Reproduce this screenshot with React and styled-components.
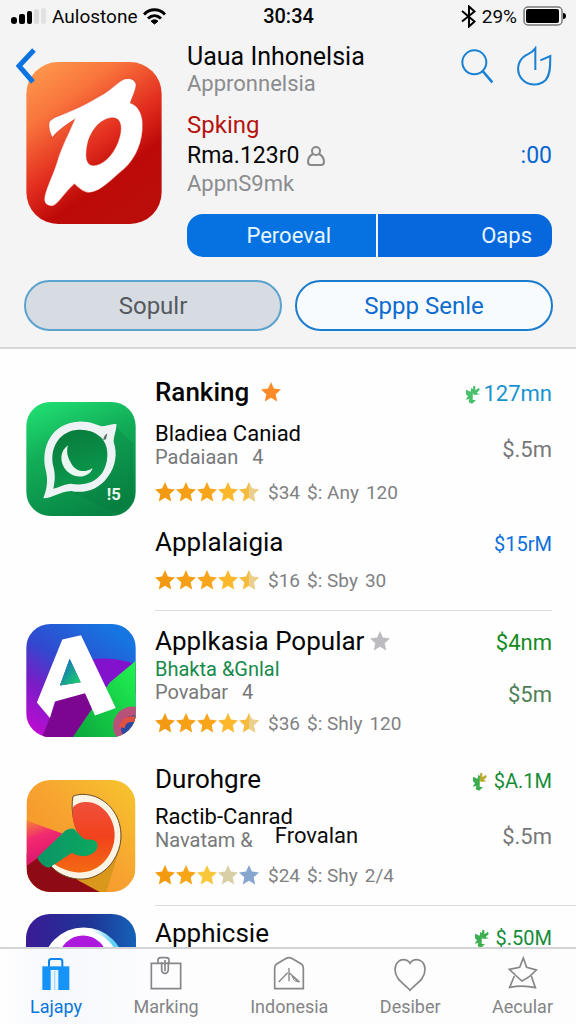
import React from "react";
import styled, { createGlobalStyle } from "styled-components";

const GlobalStyle = createGlobalStyle`
  *, *::before, *::after { box-sizing: border-box; }
  body {
    margin: 0;
    background: #fefefe;
    color: #060606;
    font-family: Roboto, "Liberation Sans", sans-serif;
  }
  button { font: inherit; color: inherit; border: 0; padding: 0; background: none; cursor: pointer; }
  h1, h2, p { margin: 0; font-weight: 400; }
  svg { display: block; flex: none; }
`;

const Screen = styled.div`
  height: 100vh;
  display: flex;
  flex-direction: column;
  overflow: hidden;
`;

const Header = styled.header`
  flex: none;
  background: #f4f4f5;
  border-bottom: 2px solid #d6d7d9;
`;

const StatusBar = styled.div`
  display: grid;
  grid-template-columns: 1fr auto 1fr;
  align-items: center;
  height: 32px;
  padding: 0 10px 0 11px;
  font-size: 19px;
`;

const StatusSide = styled.div`
  display: flex;
  align-items: center;
  gap: ${(p) => p.$gap}px;
  justify-content: ${(p) => (p.$end ? "flex-end" : "flex-start")};
`;

const Clock = styled.time`
  font-weight: 500;
  font-size: 20px;
`;

const Hero = styled.section`
  position: relative;
  display: flex;
  gap: 25px;
  padding: 10px 24px 0 26px;
`;

const BackButton = styled.button`
  position: absolute;
  left: 16px;
  top: 16px;
`;

const HeroIcon = styled.div`
  padding-top: 20px;
`;

const HeroInfo = styled.div`
  flex: 1;
  min-width: 0;
`;

const HeroTop = styled.div`
  display: flex;
  justify-content: space-between;
  align-items: flex-start;
`;

const Actions = styled.div`
  display: flex;
  gap: 22px;
  padding-top: 4px;
`;

const AppTitle = styled.h1`
  font-size: 25px;
  line-height: 30px;
`;

const HeroLine = styled.p`
  display: flex;
  align-items: center;
  gap: 8px;
  font-size: ${(p) => p.$size}px;
  line-height: ${(p) => p.$line}px;
  margin-top: ${(p) => p.$top || 0}px;
  color: ${(p) => p.$color || "inherit"};
`;

const Count = styled.span`
  margin-left: auto;
  color: #0a66cf;
`;

const Segments = styled.div`
  display: grid;
  grid-template-columns: 189fr 174fr;
  gap: 2px;
  margin-top: 18px;
  border-radius: 16px;
  overflow: hidden;
`;

const Segment = styled.button`
  height: 43px;
  padding-right: ${(p) => p.$pad}px;
  text-align: right;
  font-size: 22px;
  color: #e6f6ff;
  background: ${(p) => p.$bg};
`;

const Pills = styled.div`
  display: grid;
  grid-template-columns: 1fr 1fr;
  gap: 13px;
  padding: 23px 23px 16px 24px;
`;

const Pill = styled.button`
  height: 51px;
  border-radius: 26px;
  font-size: 24px;
  border: 2px solid ${(p) => (p.$muted ? "#5aa3cf" : "#1a7ccc")};
  background: ${(p) => (p.$muted ? "#d7dbe2" : "#f8fbfd")};
  color: ${(p) => (p.$muted ? "#55595e" : "#0d6ccf")};
`;

const List = styled.main`
  flex: 1;
  min-height: 0;
  overflow: hidden;
  background: #fefefe;
`;

const Entry = styled.article`
  display: flex;
  gap: 19px;
  padding: 0 24px 0 26px;
`;

const EntryIcon = styled.div`
  padding-top: ${(p) => p.$top}px;
`;

const EntryBody = styled.div`
  flex: 1;
  min-width: 0;
  padding-top: ${(p) => p.$top}px;
`;

const Listing = styled.div`
  display: flex;
  justify-content: space-between;
  margin-top: ${(p) => p.$top || 0}px;
`;

const Name = styled.h2`
  display: flex;
  align-items: center;
  gap: ${(p) => (p.$strong ? 12 : 6)}px;
  font-size: 26px;
  line-height: 32px;
  font-weight: ${(p) => (p.$strong ? 500 : 400)};
`;

const Developer = styled.p`
  font-size: ${(p) => (p.$green ? 20 : 22)}px;
  line-height: 24px;
  margin-top: ${(p) => p.$top || 0}px;
  color: ${(p) => (p.$green ? "#178a4b" : "inherit")};
`;

const Meta = styled.p`
  display: flex;
  gap: 14px;
  font-size: 20px;
  line-height: 22px;
  color: #77787a;
`;

const MetaStrong = styled.span`
  margin-left: 8px;
  color: #0c0c0c;
  font-size: 22px;
  line-height: 14px;
`;

const Rating = styled.div`
  display: flex;
  align-items: center;
  gap: 9px;
  height: 24px;
  margin-top: ${(p) => p.$top}px;
  font-size: 19px;
  color: #808183;
`;

const Stars = styled.div`
  display: flex;
  gap: 1px;
`;

const Words = styled.span`
  display: flex;
  gap: 7px;
`;

const Prices = styled.div`
  display: flex;
  flex-direction: column;
  align-items: flex-end;
  gap: ${(p) => p.$gap || 28}px;
  padding-top: ${(p) => p.$top || 4}px;
`;

const Price = styled.span`
  display: flex;
  align-items: center;
  gap: ${(p) => (p.$small ? 6 : 2)}px;
  font-size: ${(p) => (p.$small ? 20 : 22)}px;
  line-height: 28px;
  color: ${(p) => p.$color};
`;

const Rule = styled.hr`
  border: 0;
  border-top: 1px solid #dcdde0;
  margin: 18px ${(p) => (p.$wide ? "-24px" : "0")} 0 0;
`;

const TabBar = styled.nav`
  flex: none;
  display: flex;
  justify-content: space-between;
  height: 77px;
  padding: 7px 23px 0 30px;
  border-top: 2px solid #d3d4d6;
  background: linear-gradient(90deg, #fefefe 0, #f6f8fc 9%, #fdfdfe 30%);
`;

const Tab = styled.button`
  display: flex;
  flex-direction: column;
  align-items: center;
  gap: 3px;
  font-size: 18px;
  line-height: 24px;
  color: ${(p) => (p.$active ? "#0a76dc" : "#838486")};
`;

const STAR = "M10 0 12.9 6.6 20 7.4 14.7 12.2 16.2 19.4 10 15.8 3.8 19.4 5.3 12.2 0 7.4 7.1 6.6Z";

function Star({ color, half, size = 20 }) {
  return (
    <svg width={size} height={size} viewBox="0 0 20 20" aria-hidden="true">
      <path d={STAR} fill={color} />
      {half && <path d="M10 0 12.9 6.6 20 7.4 14.7 12.2 16.2 19.4 10 15.8Z" fill={half} />}
    </svg>
  );
}

const FULL = [["#f39a12"], ["#f79f16"], ["#f8a51c"], ["#fcb72a"], ["#f6bb3c", "#ebcf8e"]];
const LOW = [["#f49a0e"], ["#f8a516"], ["#f9c73c"], ["#d8cfa4"], ["#87a6cf"]];

function RatingLine({ top, words, stars = FULL }) {
  return (
    <Rating $top={top}>
      <Stars role="img" aria-label="Rating">
        {stars.map(([color, half], i) => (
          <Star key={i} color={color} half={half} />
        ))}
      </Stars>
      <Words>
        {words.map((w) => (
          <span key={w}>{w}</span>
        ))}
      </Words>
    </Rating>
  );
}

function Sprout({ color, accent }) {
  return (
    <svg width="16" height="19" viewBox="963 56 48 57" aria-hidden="true">
      <path d="M966 70 980 76 982 64 987 68 986 100 996 102 984 112 974 108 976 98 965 100 972 90 966 84Z" fill={color} />
      <path d="M988 58 994 60 994 72 1005 64 1007 71 998 80 1008 84 990 86 986 80Z" fill={accent || color} />
    </svg>
  );
}

function SignalIcon() {
  return (
    <svg width="35" height="16" viewBox="0 0 35 16" aria-hidden="true">
      <rect x="0" y="9" width="6" height="7" rx="3" />
      <rect x="8" y="6" width="6" height="10" rx="2" />
      <rect x="16" y="3" width="5" height="13" rx="2" />
      <rect x="23" y="1" width="5" height="15" rx="2" fill="#dcdcdd" />
      <rect x="30" y="0" width="5" height="16" rx="2" fill="#e2e2e3" />
    </svg>
  );
}

function WifiIcon() {
  return (
    <svg width="23" height="17" viewBox="0 0 23 17" fill="none" stroke="#000" strokeWidth="3" aria-hidden="true">
      <path d="M1 6.500C7 .3 16 .3 22 6.500" />
      <path d="M5 10.500C9 6.800 14 6.800 18 10.500" />
      <path d="M8 13.200C10 11.400 13 11.400 15 13.200L11.500 16Z" fill="#000" strokeWidth="1" />
    </svg>
  );
}

function BluetoothIcon() {
  return (
    <svg width="15" height="23" viewBox="0 0 15 23" fill="none" stroke="#000" strokeWidth="2" aria-hidden="true">
      <path d="M1 6 13.500 16.500 8 21.500V1.500L13.500 6.500 1 16.500" />
    </svg>
  );
}

function BatteryIcon() {
  return (
    <svg width="43" height="20" viewBox="0 0 43 20" aria-hidden="true">
      <rect x="1" y="1" width="38" height="18" rx="4" fill="#fafafa" stroke="#777a78" strokeWidth="1.500" />
      <rect x="3" y="3" width="33" height="14" rx="2" />
      <path d="M40 7Q43 7 43 10T40 13Z" />
    </svg>
  );
}

function BrandIcon() {
  return (
    <svg width="136" height="162" viewBox="80 37 405 485" role="img" aria-label="Uaua Inhonelsia icon">
      <defs>
        <linearGradient id="brand" x1="0" y1="0" x2="0.6" y2="1">
          <stop offset="0" stopColor="#ff9f50" />
          <stop offset="0.3" stopColor="#f9743c" />
          <stop offset="0.6" stopColor="#e22c1e" />
          <stop offset="0.8" stopColor="#bd0a08" />
          <stop offset="1" stopColor="#bb0d0a" />
        </linearGradient>
      </defs>
      <rect x="80" y="37" width="405" height="485" rx="95" fill="url(#brand)" />
      <path
        fill="#fff"
        fillRule="evenodd"
        stroke="#c92a16"
        strokeOpacity=".35"
        strokeWidth="3"
        d="M150 214C144 226 150 250 158 263C175 240 200 225 225 208C212 240 185 290 172 335C160 375 143 405 135 438C130 458 142 469 157 468C176 464 190 432 224 402C236 413 250 428 270 428C305 424 338 385 372 358C408 325 430 275 428 220C427 190 412 166 391 160C396 143 410 117 408 103C404 87 386 84 372 89C350 100 330 124 300 139C260 164 212 186 165 203ZM340 204C368 206 368 243 354 278C338 318 308 347 280 347C256 345 256 313 264 278C276 236 306 204 340 204Z"
      />
    </svg>
  );
}

function ChatIcon() {
  return (
    <svg width="110" height="114" viewBox="50 65 328 342" role="img" aria-label="Ranking icon">
      <defs>
        <linearGradient id="chat" x1="0.2" y1="0" x2="0.6" y2="1">
          <stop offset="0" stopColor="#1fdc70" />
          <stop offset="0.4" stopColor="#12ad58" />
          <stop offset="1" stopColor="#078443" />
        </linearGradient>
        <linearGradient id="chatInner" x1="0.2" y1="0" x2="0.5" y2="1">
          <stop offset="0" stopColor="#087b3c" />
          <stop offset="1" stopColor="#0b9b4d" />
        </linearGradient>
      </defs>
      <rect x="50" y="65" width="328" height="342" rx="72" fill="url(#chat)" />
      <path d="M320 140 370 190V360L330 400 180 335Z" fill="#046c36" opacity=".2" />
      <path
        d="M101 354C112 325 116 300 108 268C92 198 128 128 206 124C240 122 256 133 275 138C290 138 304 129 320 131C321 150 312 165 312 185C324 220 318 258 294 290C266 330 222 340 184 332C152 333 128 354 101 354Z"
        fill="#edf3f4"
      />
      <path
        d="M131 325C136 300 137 285 132 262C118 212 142 156 200 149C236 146 262 157 280 178C300 205 296 250 277 279C252 312 216 316 182 310C160 312 145 323 131 325Z"
        fill="url(#chatInner)"
      />
      <path d="M175 195C150 212 148 248 172 273C198 298 240 292 249 263C224 280 200 272 187 253C174 233 169 215 175 195Z" fill="#eaf6f0" />
      <path d="M280 179 285 166 293 159 289 177Z" fill="#526b62" />
      <text x="291" y="360" fontSize="50" fontWeight="700" fill="#e9f7ef" fontFamily="Roboto">!5</text>
    </svg>
  );
}

function LetterIcon() {
  return (
    <svg width="110" height="113" viewBox="50 40 328 338" role="img" aria-label="Applkasia Popular icon">
      <defs>
        <linearGradient id="letterSky" x1="0.7" y1="0" x2="0" y2="1">
          <stop offset="0" stopColor="#1675e0" />
          <stop offset="0.4" stopColor="#3149cf" />
          <stop offset="0.65" stopColor="#7a1cc6" />
          <stop offset="1" stopColor="#cc08d4" />
        </linearGradient>
        <linearGradient id="letterHole" x1="0" y1="0" x2="1" y2="1">
          <stop offset="0" stopColor="#1762c8" />
          <stop offset="1" stopColor="#18d860" />
        </linearGradient>
        <linearGradient id="letterLeaf" x1="0" y1="1" x2="1" y2="0">
          <stop offset="0" stopColor="#0aa63c" />
          <stop offset="1" stopColor="#22f452" />
        </linearGradient>
        <clipPath id="letterClip">
          <rect x="50" y="40" width="328" height="338" rx="72" />
        </clipPath>
      </defs>
      <g clipPath="url(#letterClip)">
        <rect x="50" y="40" width="328" height="338" fill="url(#letterSky)" />
        <path d="M240 148C290 135 340 150 378 158V250H250Z" fill="#8212cc" />
        <path d="M98 378 140 270 240 240 265 310 190 378Z" fill="#7c0690" />
        <path d="M190 378 300 215 378 150V378Z" fill="url(#letterLeaf)" />
        <circle cx="368" cy="345" r="58" fill="#b9527a" />
        <circle cx="372" cy="352" r="38" fill="#2c4aa0" />
        <path d="M328 348C335 318 365 312 378 318V334C356 328 345 340 345 352Z" fill="#e2513f" />
        <path
          fillRule="evenodd"
          fill="#fff"
          d="M158 86 214 74 318 291 256 314 226 247 136 272 121 321 82 275ZM180 144 151 224 213 214Z"
        />
        <path d="M180 144 151 224 213 214Z" fill="url(#letterHole)" />
      </g>
    </svg>
  );
}

function FruitIcon() {
  return (
    <svg width="110" height="112" viewBox="50 43 328 337" role="img" aria-label="Durohgre icon">
      <defs>
        <linearGradient id="fruitBg" x1="0" y1="1" x2="1" y2="0">
          <stop offset="0" stopColor="#f28a22" />
          <stop offset="0.5" stopColor="#f7a230" />
          <stop offset="1" stopColor="#f6c62e" />
        </linearGradient>
        <linearGradient id="fruitFlesh" x1="0.3" y1="0" x2="0.3" y2="1">
          <stop offset="0" stopColor="#f0503c" />
          <stop offset="0.5" stopColor="#f2421c" />
          <stop offset="1" stopColor="#f36a12" />
        </linearGradient>
        <linearGradient id="fruitLeaf" x1="0" y1="0" x2="1" y2="0">
          <stop offset="0" stopColor="#0d9466" />
          <stop offset="1" stopColor="#0aa860" />
        </linearGradient>
        <linearGradient id="fruitPink" x1="0.2" y1="0" x2="0.5" y2="1">
          <stop offset="0" stopColor="#f47a3c" />
          <stop offset="0.35" stopColor="#f22a70" />
          <stop offset="1" stopColor="#d8106c" />
        </linearGradient>
        <clipPath id="fruitClip">
          <rect x="50" y="43" width="328" height="337" rx="72" />
        </clipPath>
      </defs>
      <g clipPath="url(#fruitClip)">
        <rect x="50" y="43" width="328" height="337" fill="url(#fruitBg)" />
        <path d="M334 190 330 250 290 380H240L205 340Z" fill="#d9971c" />
        <path d="M50 262 120 290 205 345 270 380H50Z" fill="#8e0a14" />
        <path d="M50 165 158 204 84 278 50 302Z" fill="url(#fruitPink)" />
        <path
          d="M190 92C210 82 250 84 280 105C325 135 342 190 331 240C315 305 262 345 205 341C170 338 140 322 122 300L187 258L220 225C192 195 182 130 190 92Z"
          fill="#fbf4e4"
          stroke="#6b4a20"
          strokeWidth="3"
        />
        <path d="M190 124C205 108 240 102 268 120C306 145 322 190 313 232C300 288 258 324 205 321C172 319 148 306 128 293L200 240L222 225C196 200 184 160 190 124Z" fill="url(#fruitFlesh)" />
        <path d="M82 276 158 204C166 192 178 188 192 190C205 200 214 218 232 223C252 219 267 228 263 246C255 272 215 280 187 262L118 307C102 304 90 292 82 276Z" fill="url(#fruitLeaf)" />
      </g>
    </svg>
  );
}

function RingIcon() {
  return (
    <svg width="110" height="113" viewBox="50 448 328 337" role="img" aria-label="Apphicsie icon">
      <defs>
        <linearGradient id="ringBg" x1="0" y1="0" x2="1" y2="0">
          <stop offset="0" stopColor="#3a1a96" />
          <stop offset="0.6" stopColor="#1e3796" />
          <stop offset="1" stopColor="#1562b8" />
        </linearGradient>
        <linearGradient id="ringEdge" x1="0" y1="0" x2="1" y2="0">
          <stop offset="0.6" stopColor="#fff" />
          <stop offset="0.85" stopColor="#5fd0f4" />
        </linearGradient>
      </defs>
      <rect x="50" y="448" width="328" height="337" rx="72" fill="url(#ringBg)" />
      <circle cx="222" cy="611" r="123" fill="url(#ringEdge)" />
      <circle cx="216" cy="611" r="115" fill="#fff" />
      <circle cx="220" cy="584" r="72" fill="#ac18dc" />
    </svg>
  );
}

const tabIcon = { width: 34, height: 36, fill: "none", stroke: "#858688", strokeWidth: 5, "aria-hidden": true };

const TABS = [
  {
    label: "Lajapy",
    icon: (
      <svg {...tabIcon} viewBox="98 168 102 108" stroke="#0b84ee">
        <path d="M128 200V184Q128 177 136 177H160Q168 177 168 184V200" strokeWidth="6" />
        <path d="M108 199H189V270H108Z" fill="#1593f8" stroke="none" />
        <path d="M133 210H156V270H133Z" fill="#eaf6ff" stroke="none" />
        <path d="M145 212V270" stroke="#a8d8fb" strokeWidth="4" />
      </svg>
    ),
  },
  {
    label: "Marking",
    icon: (
      <svg {...tabIcon} viewBox="407 168 102 108">
        <path d="M414 190H502V266H414Z" />
        <path d="M434 190V180Q434 173 442 173H458Q467 173 467 180V190" />
        <path d="M445 186V210Q447 222 457 220Q465 218 465 206V186M455 180V214" />
      </svg>
    ),
  },
  {
    label: "Indonesia",
    icon: (
      <svg {...tabIcon} viewBox="733 168 102 108">
        <path d="M741 266V203Q741 196 747 192L776 175Q784 171 792 175L821 192Q827 196 827 203V266Z" />
        <path d="M753 246 780 218M784 204V244M786 220 816 246" strokeWidth="4" />
        <path d="M793 228 812 246 800 242Z" strokeWidth="3" />
      </svg>
    ),
  },
  {
    label: "Desiber",
    icon: (
      <svg {...tabIcon} viewBox="1060 168 102 108">
        <path d="M1111 271C1095 252 1066 240 1066 208C1067 186 1082 179 1091 179C1101 179 1108 185 1111 190C1114 185 1122 179 1131 179C1143 179 1156 188 1156 208C1156 240 1127 252 1111 271Z" />
      </svg>
    ),
  },
  {
    label: "Aecular",
    icon: (
      <svg {...tabIcon} viewBox="1373 168 102 108">
        <path d="M1425 174 1435 202 1464 210 1443 230 1421 243 1404 228 1383 208 1414 202Z" />
        <path d="M1398 228 1384 262Q1424 254 1461 263L1449 228" />
      </svg>
    ),
  },
];

export default function App() {
  return (
    <Screen>
      <GlobalStyle />
      <Header>
        <StatusBar>
          <StatusSide $gap={6}>
            <SignalIcon />
            <span>Aulostone</span>
            <WifiIcon />
          </StatusSide>
          <Clock>30:34</Clock>
          <StatusSide $gap={6} $end>
            <BluetoothIcon />
            <span>29%</span>
            <BatteryIcon />
          </StatusSide>
        </StatusBar>

        <Hero>
          <HeroIcon>
            <BrandIcon />
          </HeroIcon>
          <BackButton aria-label="Back">
            <svg width="21" height="36" viewBox="0 0 21 36" fill="none" stroke="#0b73e0" strokeWidth="5">
              <path d="M18 2 3 18 17 34" />
            </svg>
          </BackButton>
          <HeroInfo>
            <HeroTop>
              <div>
                <AppTitle>Uaua Inhonelsia</AppTitle>
                <HeroLine $size={22} $line={24} $color="#8b8c8e">Appronnelsia</HeroLine>
              </div>
              <Actions>
                <button aria-label="Search">
                  <svg width="34" height="40" viewBox="519 136 102 120" fill="none" stroke="#1a80d2" strokeWidth="6">
                    <circle cx="559" cy="185" r="36" />
                    <path d="M584 211 613 245" strokeWidth="8" />
                  </svg>
                </button>
                <button aria-label="Share">
                  <svg width="35" height="40" viewBox="690 136 105 120" fill="none" stroke="#1a80d2" strokeWidth="6">
                    <path d="M745 208V143C735 158 722 160 712 167C690 184 688 214 703 233C722 257 758 256 776 238C792 220 789 190 790 166L760 179" />
                  </svg>
                </button>
              </Actions>
            </HeroTop>
            <HeroLine $size={24} $line={30} $top={14} $color="#b5140f">Spking</HeroLine>
            <HeroLine $size={23} $line={32}>
              Rma.123r0
              <svg width="18" height="20" viewBox="0 0 18 20" fill="none" stroke="#88898b" strokeWidth="2" aria-hidden="true">
                <circle cx="9" cy="5" r="4" />
                <path d="M6 8C2 10 1 13 1 16Q1 19 4 19H14Q17 19 17 16C17 13 16 10 12 8" />
              </svg>
              <Count>:00</Count>
            </HeroLine>
            <HeroLine $size={22} $line={24} $color="#8b8c8e">AppnS9mk</HeroLine>
            <Segments>
              <Segment $pad={45} $bg="#0672e2">Peroeval</Segment>
              <Segment $pad={20} $bg="#0668dc">Oaps</Segment>
            </Segments>
          </HeroInfo>
        </Hero>

        <Pills>
          <Pill $muted>Sopulr</Pill>
          <Pill>Sppp Senle</Pill>
        </Pills>
      </Header>

      <List>
        <Entry>
          <EntryIcon $top={53}>
            <ChatIcon />
          </EntryIcon>
          <EntryBody $top={27}>
            <Listing>
              <div>
                <Name $strong>
                  Ranking <Star color="#fb8a28" />
                </Name>
                <Developer $top={14}>Bladiea Caniad</Developer>
                <Meta>
                  <span>Padaiaan</span>
                  <span>4</span>
                </Meta>
                <RatingLine top={12} words={["$34", "$: Any", "120"]} />
              </div>
              <Prices>
                <Price $color="#1794cf">
                  <Sprout color="#48bf6a" />
                  127mn
                </Price>
                <Price $color="#77787a">$.5m</Price>
              </Prices>
            </Listing>
            <Listing $top={22}>
              <div>
                <Name>Applalaigia</Name>
                <RatingLine top={10} words={["$16", "$: Sby", "30"]} />
              </div>
              <Prices>
                <Price $small $color="#0d6fdc">$15rM</Price>
              </Prices>
            </Listing>
            <Rule />
          </EntryBody>
        </Entry>

        <Entry>
          <EntryIcon $top={13}>
            <LetterIcon />
          </EntryIcon>
          <EntryBody $top={14}>
            <Listing>
              <div>
                <Name>
                  Applkasia Popular <Star color="#bcbcc0" />
                </Name>
                <Developer $green>Bhakta&nbsp;&amp;Gnlal</Developer>
                <Meta>
                  <span>Povabar</span>
                  <span>4</span>
                </Meta>
                <RatingLine top={8} words={["$36", "$: Shly", "120"]} />
              </div>
              <Prices $gap={24}>
                <Price $color="#138a1e">$4nm</Price>
                <Price $color="#4f8058">$5m</Price>
              </Prices>
            </Listing>
          </EntryBody>
        </Entry>

        <Entry>
          <EntryIcon $top={43}>
            <FruitIcon />
          </EntryIcon>
          <EntryBody $top={26}>
            <Listing>
              <div>
                <Name>Durohgre</Name>
                <Developer $top={10}>Ractib-Canrad</Developer>
                <Meta>
                  <span>Navatam &amp;</span>
                  <MetaStrong>Frovalan</MetaStrong>
                </Meta>
                <RatingLine top={12} words={["$24", "$: Shy", "2/4"]} stars={LOW} />
              </div>
              <Prices>
                <Price $small $color="#158c3a">
                  <Sprout color="#3cae50" accent="#b9a92c" />
                  $A.1M
                </Price>
                <Price $color="#77787a">$.5m</Price>
              </Prices>
            </Listing>
            <Rule $wide />
          </EntryBody>
        </Entry>

        <Entry>
          <EntryIcon $top={8}>
            <RingIcon />
          </EntryIcon>
          <EntryBody $top={8}>
            <Listing>
              <Name>Apphicsie</Name>
              <Prices $top={10}>
                <Price $small $color="#158c3a">
                  <Sprout color="#3cae50" />
                  $.50M
                </Price>
              </Prices>
            </Listing>
          </EntryBody>
        </Entry>
      </List>

      <TabBar aria-label="Sections">
        {TABS.map((tab, i) => (
          <Tab key={tab.label} $active={i === 0}>
            {tab.icon}
            {tab.label}
          </Tab>
        ))}
      </TabBar>
    </Screen>
  );
}
